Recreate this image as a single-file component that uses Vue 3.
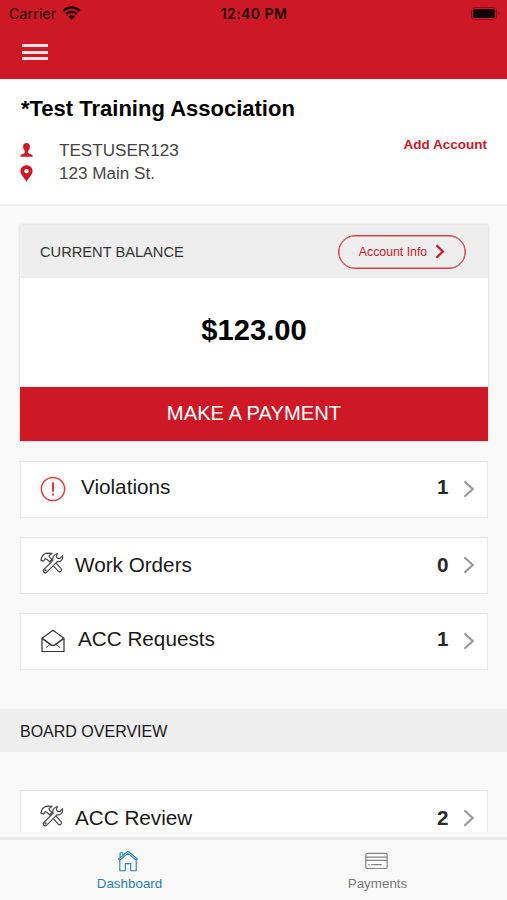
<script setup>
const requests = [
  { label: 'Violations', count: 1, icon: 'alert' },
  { label: 'Work Orders', count: 0, icon: 'tools' },
  { label: 'ACC Requests', count: 1, icon: 'mail' },
]
const reviews = [{ label: 'ACC Review', count: 2, icon: 'tools' }]
const sections = [
  { name: 'requests', rows: requests },
  { name: 'board', title: 'BOARD OVERVIEW', rows: reviews },
]
</script>

<template>
  <div class="screen">
    <header class="top">
      <div class="status">
        <div class="carrier">
          <span>Carrier</span>
          <svg width="19" height="14" viewBox="0 0 19 14" fill="none" stroke="#1d0003" stroke-width="2.5">
            <path d="M1.2 5.1C5.8.3 13.2.3 17.8 5.1M4.1 8.1c3-3 7.8-3 10.8 0" />
            <path d="M9.5 13.6 6.3 10.4c1.8-1.7 4.600-1.700 6.400 0z" fill="#1d0003" stroke="none" />
          </svg>
        </div>
        <span class="clock">12:40 PM</span>
        <div class="battery">
          <svg width="31" height="15" viewBox="0 0 31 15">
            <rect x="1.500" y="1.500" width="25" height="12" rx="3" fill="none" stroke="#8d0d19" />
            <rect x="3" y="3" width="22" height="9" rx="1.800" fill="#120002" />
            <path d="M28.400 5.500c1.500.5 1.500 3.500 0 4z" fill="#8d0d19" />
          </svg>
        </div>
      </div>
      <div class="menu"><i></i><i></i><i></i></div>
    </header>

    <section class="account">
      <h1>*Test Training Association</h1>
      <div class="details">
        <div class="lines">
          <div class="line">
            <svg width="13" height="14" viewBox="0 0 13 14" fill="#cf1826">
              <path d="M6.500 0C4.300 0 3.100 1.400 3.100 3.500c0 1.800.7 3.400 1.700 4.300v1.700c0 .7-.6 1-1.500 1.300C1.500 11.300.3 11.900.2 13.700h12.600c-.1-1.800-1.300-2.400-3.100-2.900-.9-.3-1.500-.6-1.500-1.300V7.800c1-.9 1.700-2.500 1.700-4.300C9.900 1.400 8.700 0 6.500 0z" />
            </svg>
            <span>TESTUSER123</span>
          </div>
          <div class="line">
            <svg width="13" height="17" viewBox="0 0 13 17" fill="#cf1826" fill-rule="evenodd">
              <path d="M6.500.2C3 .2.4 2.700.4 6c0 3.300 3.500 6.300 6.100 10.700 2.600-4.400 6.100-7.400 6.100-10.700C12.600 2.700 10 .2 6.500.2zm0 3.700a2.200 2.200 0 1 1 0 4.400 2.200 2.200 0 0 1 0-4.400z" />
            </svg>
            <span>123 Main St.</span>
          </div>
        </div>
        <a class="add">Add Account</a>
      </div>
    </section>

    <main class="content">
      <section class="card">
        <div class="card-head">
          <span>CURRENT BALANCE</span>
          <button class="info">
            <span>Account Info</span>
            <svg width="10" height="15" viewBox="0 0 10 15" fill="none" stroke="#cf1826" stroke-width="2.200"><path d="M1.500 1.200 7.900 7.500 1.500 13.800" /></svg>
          </button>
        </div>
        <div class="amount">$123.00</div>
        <button class="pay">MAKE A PAYMENT</button>
      </section>

      <template v-for="section in sections" :key="section.name">
        <h2 v-if="section.title">{{ section.title }}</h2>
        <ul :class="['rows', section.name]">
          <li v-for="row in section.rows" :key="row.label" :class="row.icon">
            <svg v-if="row.icon === 'alert'" class="glyph" width="26" height="26" viewBox="0 0 26 26" fill="none" stroke="#e8393d">
              <circle cx="13" cy="13" r="11.600" stroke-width="1.500" />
              <path d="M13 6.300v9.400M13 17.600v2" stroke-width="2" />
            </svg>
            <svg v-else-if="row.icon === 'tools'" class="glyph" width="24" height="22" viewBox="0 0 24 22" fill="#fff" stroke="#4a4a4a" stroke-width="1.200" stroke-linejoin="round">
              <path d="M9.700 9.400 12.300 7 21.100 16.700c1.500 1.900-1 4.200-2.800 2.600z" />
              <path d="M.9 8.100 1.700 5.300C2.600 3 5 1.100 8 1.100l4 .3-3 2 .6 2 2.500 2.100-2.500 2.300L7.200 7.500l-2-.9L3.500 9.200z" />
              <path d="M13 8.400c-1-3 .9-6.400 4.500-6.900l-1.300 2.900 1.500 2 2.500-.1 2.200-2.600c.9 3.800-1.700 6.700-5.200 6L6.700 20.200c-1.800 1.800-4.600-.8-2.900-2.700z" />
              <circle cx="5.500" cy="18.400" r=".5" />
            </svg>
            <svg v-else class="glyph" width="24" height="24" viewBox="0 0 24 24" fill="none" stroke="#333" stroke-width="1.200" stroke-linejoin="round">
              <path d="M1 9.300 12 1.200l11 8.100v13.200H1z" />
              <path d="M1.200 9.400 10 15.800q2 1.300 4 0l8.800-6.400" stroke-width="1.500" />
              <path d="M5 18.600 9.200 15.300M19 18.600l-4.200-3.300" stroke-width=".9" />
            </svg>
            <span class="label">{{ row.label }}</span>
            <b>{{ row.count }}</b>
            <svg class="arrow" width="12" height="18" viewBox="0 0 12 18" fill="none" stroke="#999" stroke-width="2.200"><path d="M1.400 1.200 9.700 9l-8.300 7.800" /></svg>
          </li>
        </ul>
      </template>
    </main>

    <nav class="tabs">
      <a class="tab active">
        <svg width="20" height="21" viewBox="0 0 20 21" fill="none" stroke="#2c83b0" stroke-width="1.100" stroke-linejoin="round">
          <path d="M1.800 9.800v10.400h5.500v-7.100h5.400v7.100h5.500V9.800" />
          <path d="M.6 8.500 10 .8l9.400 7.700-1 1.200L10 2.900 1.600 9.700z" />
          <path d="M2.100 7V2.300h2.800v2.300" />
        </svg>
        <span>Dashboard</span>
      </a>
      <a class="tab">
        <svg width="23" height="17" viewBox="0 0 23 17" fill="none" stroke="#858585" stroke-width="1.200">
          <rect x=".8" y=".8" width="21.400" height="15.200" rx="1.600" />
          <path d="M1 4.700h21M1 7.900h21M3.300 12.200h1.300M6.200 12.200h10.500" />
        </svg>
        <span>Payments</span>
      </a>
    </nav>
  </div>
</template>

<style>
body { margin: 0; }
</style>

<style scoped>
* { box-sizing: border-box; }
.screen {
  width: 507px;
  height: 900px;
  display: flex;
  flex-direction: column;
  overflow: hidden;
  background: #f9f9f9;
  color: #000;
  font-family: "Liberation Sans", Arial, sans-serif;
}
svg { display: block; flex: none; }
button { font-family: inherit; margin: 0; }
.top { height: 79px; flex: none; background: #cf1826; }
.status {
  display: grid;
  grid-template-columns: 1fr auto 1fr;
  align-items: center;
  height: 28px;
  padding: 0 6px 0 9px;
  color: #1d0003;
  font: 14.400px/28px Inter, sans-serif;
}
.carrier { display: flex; align-items: center; gap: 6px; }
.carrier svg { margin-top: -2px; }
.clock { font-weight: 600; font-size: 14px; letter-spacing: .45px; margin-right: 2px; }
.battery { justify-self: end; margin-top: -2px; }
.menu { display: flex; flex-direction: column; gap: 3.500px; padding: 16px 0 0 22px; }
.menu i { width: 26px; height: 3px; background: #fde3e6; }
.account {
  height: 127px;
  flex: none;
  padding: 18px 20px 0 21px;
  background: #fff;
  border-bottom: 2px solid #ececec;
}
h1 { margin: 0; font-size: 22px; line-height: 24px; font-weight: 700; }
.details { display: flex; justify-content: space-between; padding-top: 17px; }
.line { display: flex; align-items: center; gap: 26px; height: 23.500px; color: #444; font-size: 17.100px; line-height: 23px; }
.line:first-child span { padding-top: 1px; }
.line svg { margin-left: -1px; }
.add { color: #cf1826; font-size: 13.500px; line-height: 16px; font-weight: 700; margin-top: -1px; }
.content { flex: 1; min-height: 0; padding-top: 19px; overflow: hidden; }
.card {
  height: 216px;
  margin: 0 19px 0 20px;
  display: flex;
  flex-direction: column;
  background: #fff;
  box-shadow: 0 0 3px rgba(0, 0, 0, .18);
}
.card-head {
  height: 53px;
  display: flex;
  align-items: center;
  justify-content: space-between;
  padding: 0 22px 0 20px;
  background: #eee;
  color: #333;
  font-size: 14.650px;
}
.info {
  width: 128px;
  height: 34px;
  display: flex;
  align-items: center;
  justify-content: center;
  gap: 8px;
  padding: 0;
  color: #cf1826;
  background: transparent;
  border: 1px solid #d2404b;
  box-shadow: inset 0 0 0 .5px #d2404b;
  border-radius: 17px;
  font-size: 12.300px;
}
.amount { flex: 1; display: flex; align-items: center; justify-content: center; font-size: 29.200px; font-weight: 700; padding-bottom: 4px; }
.pay { height: 54px; border: 0; padding: 0 0 1px; background: #cf1826; color: #fff; font-size: 20.200px; }
.rows { list-style: none; display: flex; flex-direction: column; gap: 19px; margin: 0; padding: 20px 19px 0 20px; }
.rows li {
  height: 57px;
  display: flex;
  align-items: center;
  padding: 0 12px 0 20px;
  background: #fff;
  border: 1px solid #e7e7e7;
  color: #181818;
  font-size: 20.700px;
  line-height: 24px;
}
.label { flex: 1; margin-top: -5px; }
.rows b { width: 12px; margin: -5px 14px 0 0; color: #2a2a2a; }
.glyph, .arrow { margin-top: -2px; }
.alert .label { padding-left: 15px; }
.alert .glyph { margin-left: -1px; }
.tools .label { padding-left: 10px; margin-top: -1px; }
.tools b { margin-top: -1px; }
.tools .glyph { margin-top: -5px; margin-left: -1px; margin-right: 1px; }
.mail .label { padding-left: 13px; margin-top: -5px; }
h2 {
  height: 43px;
  margin: 39px 0 0;
  padding: 0 20px;
  background: #eee;
  color: #181818;
  font-size: 16px;
  line-height: 45px;
  font-weight: 400;
}
.board { padding-top: 38px; }
.tabs {
  height: 68px;
  flex: none;
  display: grid;
  grid-template-columns: 259px 237px;
  padding-top: 13px;
  background: #f9f9f9;
  border-top: 5px solid #f9f9f9;
  box-shadow: inset 0 3px #ececec;
}
.tab { display: flex; flex-direction: column; align-items: center; color: #777; font-size: 13.400px; }
.tab svg { height: 22px; margin-left: -3px; }
.tab span { line-height: 16px; margin-top: 4px; }
.active { color: #2c7fae; }
</style>
